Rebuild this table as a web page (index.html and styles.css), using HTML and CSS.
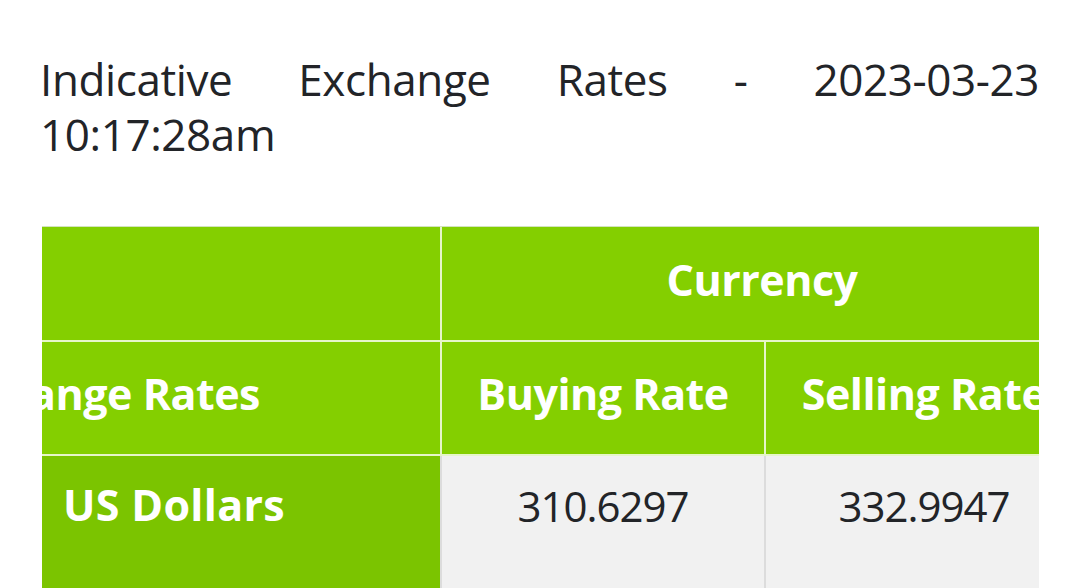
FILE: index.html
```html
<!DOCTYPE html>
<html lang="en">
<head>
<meta charset="utf-8">
<title>Indicative Exchange Rates</title>
<link rel="stylesheet" href="styles.css">
</head>
<body>
<main class="page">
  <h1 class="title">Indicative Exchange Rates - 2023-03-23 10:17:28am</h1>
  <div class="table-wrap">
    <table class="rates">
      <colgroup>
        <col class="c-name">
        <col class="c-buy">
        <col class="c-sell">
      </colgroup>
      <thead>
        <tr class="h-row h-top">
          <th class="h-blank"></th>
          <th colspan="2" class="h-cell">Currency</th>
        </tr>
        <tr class="h-row h-sub">
          <th class="h-cell h-first"><div class="clip"><span>Exchange Rates</span></div></th>
          <th class="h-cell">Buying Rate</th>
          <th class="h-cell">Selling Rate</th>
        </tr>
      </thead>
      <tbody>
        <tr class="d-row">
          <td class="d-name">US Dollars</td>
          <td class="d-val">310.6297</td>
          <td class="d-val">332.9947</td>
        </tr>
      </tbody>
    </table>
  </div>
</main>
</body>
</html>
```
FILE: styles.css
```css
html, body {
  margin: 0;
  padding: 0;
  background: #ffffff;
}
body {
  font-family: "Open Sans", "Noto Sans", sans-serif;
  color: #222428;
}
.page {
  padding: 52px 41px 0 40px;
}
.title {
  margin: 0;
  font-size: 44px;
  line-height: 55px;
  font-weight: 400;
  text-align: justify;
  letter-spacing: -0.4px;
}
.table-wrap {
  margin: 64px 0 0 2px;
  overflow: hidden;
  border-top: 1px solid #d3e3bd;
}
.rates {
  width: 1040px;
  table-layout: fixed;
  border-collapse: collapse;
}
.c-name { width: 399px; }
.c-buy { width: 324px; }
.c-sell { width: 317px; }
.h-row th {
  background: #84cf00;
  color: #ffffff;
  font-weight: 700;
  font-size: 43px;
  letter-spacing: -0.5px;
  padding: 0 0 9px;
  border: 2px solid #e6f6c9;
  border-top: 0;
  text-align: center;
  vertical-align: middle;
  white-space: nowrap;
}
.h-top th { height: 104px; }
.h-sub th { height: 103px; }
.h-row th:first-child { border-left: 0; }
.h-row th:last-child { border-right: 0; }
.clip {
  display: flex;
  justify-content: flex-end;
  overflow: hidden;
  padding-right: 180px;
}
.clip span { flex: none; }
.d-row td {
  height: 220px;
  vertical-align: top;
  border: 2px solid #dcdcdc;
  border-top: 2px solid #f2f9e6;
}
.d-row td:first-child { border-left: 0; }
.d-row td:last-child { border-right: 0; }
.d-name {
  background: #7bc400;
  color: #ffffff;
  font-size: 43px;
  font-weight: 700;
  letter-spacing: 0.3px;
  padding: 19px 0 0 21px;
  text-align: left;
}
.d-val {
  background: #f1f1f1;
  font-size: 42px;
  letter-spacing: -1px;
  padding: 21px 0 0;
  text-align: center;
  font-weight: 400;
}
```
